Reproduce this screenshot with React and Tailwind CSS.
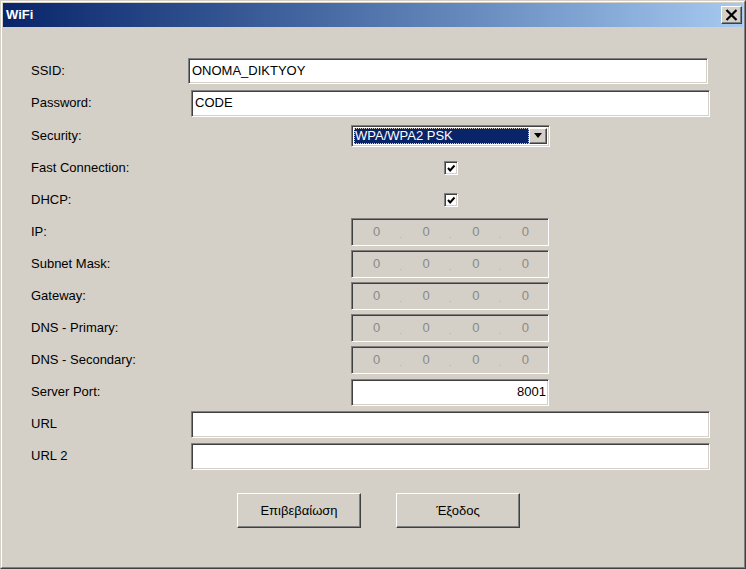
import React from "react";

const sunken =
  "border border-t-[#808080] border-l-[#808080] border-b-white border-r-white shadow-[inset_1px_1px_0_#404040,inset_-1px_-1px_0_#d4d0c8]";
const raised =
  "border border-t-white border-l-white border-b-[#404040] border-r-[#404040] shadow-[inset_-1px_-1px_0_#808080]";

const ipRows = ["IP:", "Subnet Mask:", "Gateway:", "DNS - Primary:", "DNS - Secondary:"];

function Row({ label, h = "h-8", children }) {
  return (
    <div className={`flex items-center ${h}`}>
      <div className="w-[160px] shrink-0">{label}</div>
      {children}
    </div>
  );
}

function Check() {
  return (
    <div className={`ml-[253px] w-[14px] h-[14px] bg-white ${sunken} flex items-center justify-center`}>
      <svg width="9" height="9" viewBox="0 0 9 9">
        <path d="M1 4 L3.2 6.4 L7.5 1.5" stroke="#000" strokeWidth="2" fill="none" />
      </svg>
    </div>
  );
}

function IpField() {
  return (
    <div className={`ml-[160px] w-[198px] h-[28px] bg-[#d4d0c8] ${sunken} flex items-center text-[#8a8a8a]`}>
      {[0, 1, 2, 3].map((i) => (
        <React.Fragment key={i}>
          <span className="flex-1 text-center pl-[2px]">0</span>
          {i < 3 && <span className="text-[8px] mt-[8px] text-[#a0a0a0]">.</span>}
        </React.Fragment>
      ))}
    </div>
  );
}

export default function App() {
  return (
    <div
      className="w-[746px] h-[569px] bg-[#d4d0c8] border border-t-[#d4d0c8] border-l-[#d4d0c8] border-b-[#404040] border-r-[#404040] text-black text-[13px]"
      style={{ fontFamily: '"Liberation Sans", Arial, sans-serif' }}
    >
      <div className="h-full border border-t-white border-l-white border-b-[#808080] border-r-[#808080] p-px">
        <div className="h-6 flex items-center bg-gradient-to-r from-[#0a246a] to-[#a6caf0] pl-[3px] pr-[1px]">
          <span className="text-white font-bold text-[13px]">WiFi</span>
          <div className={`ml-auto w-[21px] h-[18px] bg-[#d4d0c8] ${raised} flex items-center justify-center`}>
            <svg width="13" height="12" viewBox="0 0 13 12">
              <path d="M1.5 1 L11.5 11 M11.5 1 L1.5 11" stroke="#000" strokeWidth="2.2" />
            </svg>
          </div>
        </div>

        <div className="pl-[28px] pt-[27px]">
          <Row label="SSID:" h="h-[33px]">
            <div className={`-ml-[3px] w-[520px] h-[26px] bg-white ${sunken} flex items-center pl-[3px]`}>
              ONOMA_DIKTYOY
            </div>
          </Row>
          <Row label="Password:">
            <div className={`w-[519px] h-[27px] bg-white ${sunken} flex items-start pt-[2px] pl-[3px]`}>
              CODE
            </div>
          </Row>
          <Row label="Security:" h="h-[33px]">
            <div className={`ml-[160px] w-[199px] h-[22px] bg-white ${sunken} flex items-stretch p-[2px]`}>
              <div className="flex-1 bg-[#0a246a] text-white flex items-center pl-[1px] outline-1 outline-dotted outline-[#d4d0c8] -outline-offset-1 leading-none">
                WPA/WPA2 PSK
              </div>
              <div className={`w-[18px] bg-[#d4d0c8] ${raised} flex items-center justify-center`}>
                <svg width="8" height="5" viewBox="0 0 8 5">
                  <path d="M0 0 H8 L4 5 Z" fill="#000" />
                </svg>
              </div>
            </div>
          </Row>
          <Row label="Fast Connection:">
            <Check />
          </Row>
          <Row label="DHCP:">
            <Check />
          </Row>
          {ipRows.map((l) => (
            <Row key={l} label={l}>
              <IpField />
            </Row>
          ))}
          <Row label="Server Port:">
            <div className={`ml-[160px] w-[198px] h-[27px] bg-white ${sunken} flex items-center justify-end pr-[2px]`}>
              8001
            </div>
          </Row>
          <Row label="URL">
            <div className={`w-[519px] h-[27px] bg-white ${sunken}`} />
          </Row>
          <Row label="URL 2">
            <div className={`w-[519px] h-[27px] bg-white ${sunken}`} />
          </Row>
        </div>

        <div className="flex gap-[35px] pl-[234px] mt-[21px]">
          <div className={`w-[124px] h-[35px] ${raised} flex items-center justify-center`}>Επιβεβαίωση</div>
          <div className={`w-[124px] h-[35px] ${raised} flex items-center justify-center`}>Έξοδος</div>
        </div>
      </div>
    </div>
  );
}
